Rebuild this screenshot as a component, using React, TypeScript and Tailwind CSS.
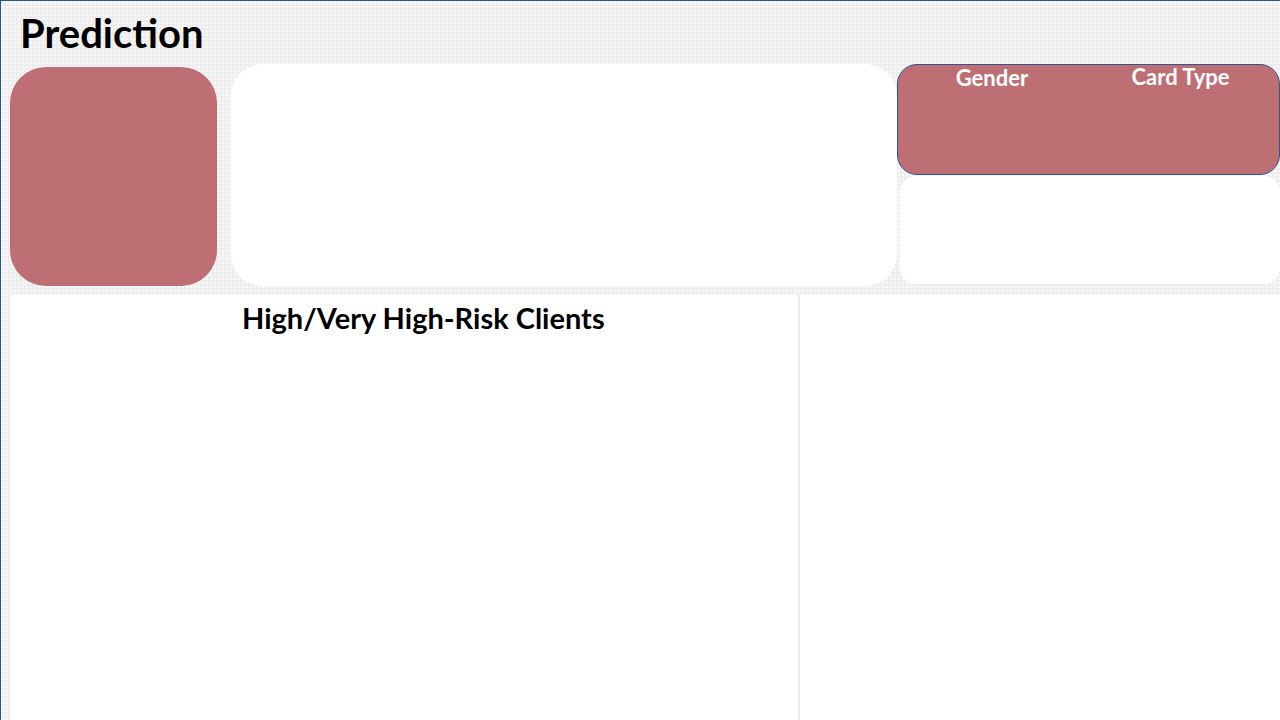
import React from "react";

export default function App() {
  return (
    <div
      className="w-[1280px] h-[720px] overflow-hidden border-t border-l border-[#2f5597] bg-[#eeeeee] bg-[radial-gradient(#fbfbfb_0.7px,transparent_0.9px)] bg-[length:4px_4px] flex flex-col"
      style={{ fontFamily: "Lato, 'Open Sans', sans-serif" }}
    >
      <div className="h-[63px] pl-[19px] pt-[8px]">
        <h1 className="text-[40px] leading-[48px] font-bold text-black">Prediction</h1>
      </div>
      <div className="flex items-start h-[222px]">
        <div className="ml-[9px] mt-[3px] w-[207px] h-[219px] rounded-[36px] bg-[#be6f74]" />
        <div className="ml-[14px] w-[666px] h-[222px] rounded-[32px] bg-white" />
        <div className="flex flex-col flex-1">
          <div className="h-[111px] rounded-[20px] border border-[#2f5597] bg-[#be6f74] flex text-white font-bold text-[22px] leading-[22px] pt-[1px]">
            <div className="w-[188px] text-center pt-[1px]">Gender</div>
            <div className="flex-1 text-center pr-[4px]">Card Type</div>
          </div>
          <div className="ml-[3px] mt-[1px] h-[108px] rounded-[16px] bg-white" />
        </div>
      </div>
      <div className="flex flex-1 mt-[9px]">
        <div className="ml-[9px] w-[788px] bg-white">
          <div className="pl-[232px] pt-[5px] text-[29px] leading-[36px] font-bold text-black">
            High/Very High-Risk Clients
          </div>
        </div>
        <div className="w-[2px] bg-[#ebebeb]" />
        <div className="flex-1 bg-white" />
      </div>
    </div>
  );
}
